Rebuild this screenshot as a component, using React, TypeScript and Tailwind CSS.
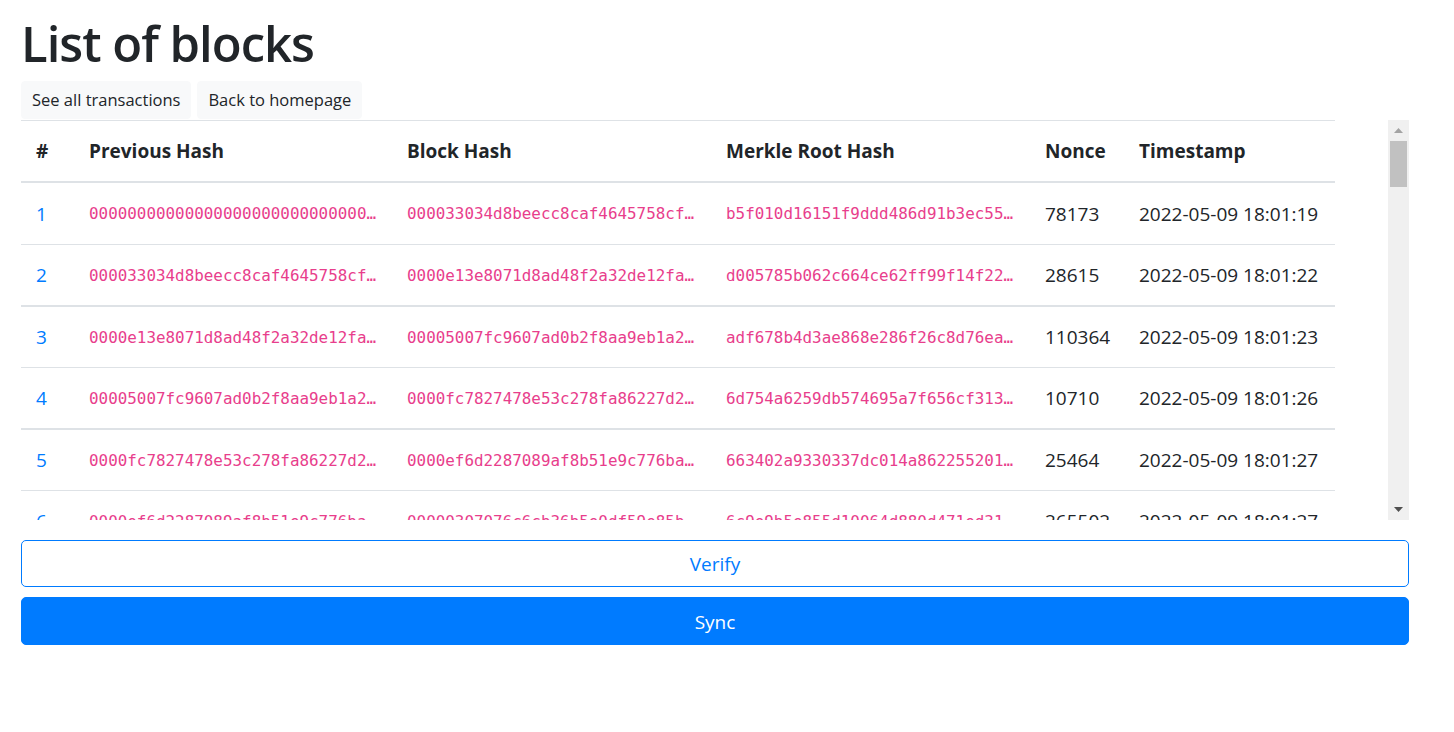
import React from "react";

type Block = {
  id: number;
  previousHash: string;
  hash: string;
  merkleRoot: string;
  nonce: number;
  timestamp: string;
};

const blocks: Block[] = [
  {
    id: 1,
    previousHash: "0000000000000000000000000000000000000000000000000000000000000000",
    hash: "000033034d8beecc8caf4645758cf0a1e5b2c7d9f3e41a6b8c0d2e4f6a8b1c3d",
    merkleRoot: "b5f010d16151f9ddd486d91b3ec55a7c9e2f4b6d8a0c1e3f5a7b9d2c4e6f8a0b",
    nonce: 78173,
    timestamp: "2022-05-09 18:01:19",
  },
  {
    id: 2,
    previousHash: "000033034d8beecc8caf4645758cf0a1e5b2c7d9f3e41a6b8c0d2e4f6a8b1c3d",
    hash: "0000e13e8071d8ad48f2a32de12fa6c8e0b2d4f6a8c1e3b5d7f9a2c4e6b8d0f2",
    merkleRoot: "d005785b062c664ce62ff99f14f22b4d6f8a0c2e4b6d8f1a3c5e7b9d2f4a6c8e",
    nonce: 28615,
    timestamp: "2022-05-09 18:01:22",
  },
  {
    id: 3,
    previousHash: "0000e13e8071d8ad48f2a32de12fa6c8e0b2d4f6a8c1e3b5d7f9a2c4e6b8d0f2",
    hash: "00005007fc9607ad0b2f8aa9eb1a2d4f6b8e0c2a4d6f8b1e3c5a7d9f2b4e6c8a",
    merkleRoot: "adf678b4d3ae868e286f26c8d76ea1c3e5b7d9f2a4c6e8b0d2f4a6c8e1b3d5f7",
    nonce: 110364,
    timestamp: "2022-05-09 18:01:23",
  },
  {
    id: 4,
    previousHash: "00005007fc9607ad0b2f8aa9eb1a2d4f6b8e0c2a4d6f8b1e3c5a7d9f2b4e6c8a",
    hash: "0000fc7827478e53c278fa86227d2e4a6c8f0b2d4e6a8c1f3b5d7e9a2c4f6b8d",
    merkleRoot: "6d754a6259db574695a7f656cf3131b3d5f7a9c2e4b6d8f0a2c4e6b8d1f3a5c7",
    nonce: 10710,
    timestamp: "2022-05-09 18:01:26",
  },
  {
    id: 5,
    previousHash: "0000fc7827478e53c278fa86227d2e4a6c8f0b2d4e6a8c1f3b5d7e9a2c4f6b8d",
    hash: "0000ef6d2287089af8b51e9c776ba3c5e7a9d1f3b5c7e9a2d4f6b8c0e2a4d6f8",
    merkleRoot: "663402a9330337dc014a8622552014b6d8f0a2c4e6b8d1f3a5c7e9b2d4f6a8c0",
    nonce: 25464,
    timestamp: "2022-05-09 18:01:27",
  },
  {
    id: 6,
    previousHash: "0000ef6d2287089af8b51e9c776ba3c5e7a9d1f3b5c7e9a2d4f6b8c0e2a4d6f8",
    hash: "00000307076c6cb36b5e0df59e85b2d4f6a8c0e2b4d6f8a1c3e5b7d9f2a4c6e8",
    merkleRoot: "6c9e9b5e855d10064d880d471ed31a3c5e7b9d2f4a6c8e0b2d4f6a8c1e3b5d7f",
    nonce: 265502,
    timestamp: "2022-05-09 18:01:27",
  },
];

// alternating border widths, like the zoomed bootstrap table renders them
const rowBorders = [
  "border-b border-[#dee2e6]",
  "border-b-2 border-[#dee2e6]",
  "border-b border-[#dee2e6]",
  "border-b-2 border-[#dee2e6]",
  "border-b border-[#dee2e6]",
  "border-b border-[#dee2e6]",
];

const Scrollbar = () => (
  <div className="flex w-[21px] flex-col bg-[#f0f0f0]">
    <div className="flex h-[21px] items-center justify-center">
      <svg width="9" height="5" viewBox="0 0 9 5">
        <path d="M0 5 L4.5 0 L9 5 Z" fill="#a3a3a3" />
      </svg>
    </div>
    <div className="mx-[2px] h-[46px] bg-[#c1c1c1]" />
    <div className="flex-1" />
    <div className="flex h-[21px] items-center justify-center">
      <svg width="9" height="5" viewBox="0 0 9 5">
        <path d="M0 0 L9 0 L4.5 5 Z" fill="#505050" />
      </svg>
    </div>
  </div>
);

const App = () => {
  const headers = [
    { label: "#", w: "w-[53px]" },
    { label: "Previous Hash", w: "w-[318px]" },
    { label: "Block Hash", w: "w-[319px]" },
    { label: "Merkle Root Hash", w: "w-[319px]" },
    { label: "Nonce", w: "w-[94px]" },
    { label: "Timestamp", w: "w-[211px]" },
  ];

  const hashCls =
    "truncate pl-[15px] pr-[12px] font-['DejaVu_Sans_Mono',monospace] text-[15.9px] text-[#e83e8c]";

  return (
    <div className="min-h-screen bg-white pt-[13px] font-['Open_Sans',sans-serif] text-[#212529]">
      <div className="ml-[21px] w-[1388px]">
        <h1 className="mb-[8px] text-[49px] font-semibold leading-[60px] tracking-[-1px]">
          List of blocks
        </h1>

        <div className="flex gap-[6px]">
          <button className="rounded-[4px] border border-[#f8f9fa] bg-[#f8f9fa] px-[10px] py-[5px] text-[16.5px] leading-[26px] text-[#212529]">
            See all transactions
          </button>
          <button className="rounded-[4px] border border-[#f8f9fa] bg-[#f8f9fa] px-[10px] py-[5px] text-[16.5px] leading-[26px] text-[#212529]">
            Back to homepage
          </button>
        </div>

        {/* Tabla con scroll */}
        <div className="mt-[1px] flex h-[400px]">
          <div className="flex-1 overflow-hidden">
            <table className="w-[1314px] table-fixed border-separate border-spacing-0">
              <thead>
                <tr>
                  {headers.map((h) => (
                    <th
                      key={h.label}
                      className={`${h.w} border-t border-b-2 border-[#dee2e6] p-0 text-left`}
                    >
                      <div className="h-[60px] px-[15px] text-[19px] font-bold leading-[61px]">
                        {h.label}
                      </div>
                    </th>
                  ))}
                </tr>
              </thead>
              <tbody>
                {blocks.map((b, i) => {
                  const border = rowBorders[i];
                  const h = i === 0 ? "h-[61px] leading-[62px]" : "h-[60px] leading-[61px]";
                  return (
                    <tr key={b.id}>
                      <td className={`${border} p-0`}>
                        <div className={`${h} px-[15px] text-[19px] text-[#007bff]`}>
                          {b.id}
                        </div>
                      </td>
                      <td className={`${border} p-0`}>
                        <div className={`${h} ${hashCls}`}>{b.previousHash}</div>
                      </td>
                      <td className={`${border} p-0`}>
                        <div className={`${h} ${hashCls}`}>{b.hash}</div>
                      </td>
                      <td className={`${border} p-0`}>
                        <div className={`${h} ${hashCls}`}>{b.merkleRoot}</div>
                      </td>
                      <td className={`${border} p-0`}>
                        <div className={`${h} px-[15px] text-[19px]`}>{b.nonce}</div>
                      </td>
                      <td className={`${border} p-0`}>
                        <div className={`${h} whitespace-nowrap px-[15px] text-[19px]`}>
                          {b.timestamp}
                        </div>
                      </td>
                    </tr>
                  );
                })}
              </tbody>
            </table>
          </div>
          <Scrollbar />
        </div>

        <button className="mt-[20px] h-[47px] w-full rounded-[5px] border border-[#007bff] bg-white text-[19px] leading-[47px] text-[#007bff]">
          Verify
        </button>
        <button className="mt-[10px] h-[48px] w-full rounded-[5px] border border-[#007bff] bg-[#007bff] text-[19px] leading-[48px] text-white">
          Sync
        </button>
      </div>
    </div>
  );
};

export default App;
